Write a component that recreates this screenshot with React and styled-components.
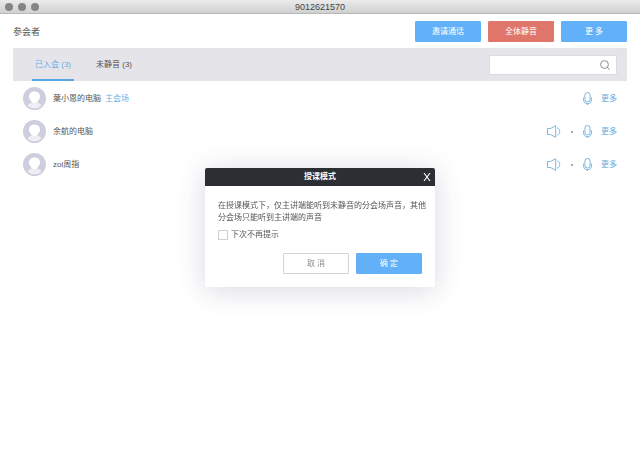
import styled, { createGlobalStyle } from "styled-components";
import { useState } from "react";

const members = [
  { id: 1, name: "葉小恩的电脑", tag: "主会场", speaker: false },
  { id: 2, name: "余航的电脑", speaker: true },
  { id: 3, name: "zol周指", speaker: true },
];

function AvatarIcon() {
  return (
    <svg width="23" height="23" viewBox="0 0 46 46" aria-hidden="true">
      <circle cx="23" cy="23" r="23" fill="#cdcfde" />
      <path d="M9 37c2-4 6-4.500 10-7h8c4 2.500 8 3 10 7a20 20 0 0 1-28 0z" fill="#eeeef4" />
      <path
        d="M23 9c-7 0-11 4.300-11 10 0 3 1 5 2.500 6.500C16 29 18 32 23 32s7-3 8.500-6.500C33 24 34 22 34 19c0-5.700-4-10-11-10z"
        fill="#fff"
      />
    </svg>
  );
}

function MicIcon() {
  return (
    <svg width="9" height="13" viewBox="0 0 9 13" fill="none" stroke="currentColor" strokeWidth="0.900" aria-hidden="true">
      <rect x="1.900" y="0.500" width="5.200" height="9.500" rx="2.600" />
      <path d="M0.500 5.500v2c0 2.500 1.500 4.300 4 4.300s4-1.800 4-4.300v-2M4.500 11.800v1.200" />
    </svg>
  );
}

function SpeakerIcon() {
  return (
    <svg width="14" height="13" viewBox="0 0 14 13" fill="none" stroke="currentColor" strokeWidth="0.900" aria-hidden="true">
      <path d="M0.500 3.500h3L8.700 0.700v11.600L3.500 9.500h-3z" />
      <path d="M10.300 2.800c3.200 1.200 3.200 6.200 0 7.400" />
    </svg>
  );
}

function SearchIcon() {
  return (
    <svg width="10" height="10" viewBox="0 0 10 10" fill="none" stroke="#8e8e90" aria-hidden="true">
      <circle cx="4.500" cy="4.500" r="3.900" />
      <path d="M7.300 7.300l2.400 2.400" />
    </svg>
  );
}

function Member({ member }) {
  return (
    <Row>
      <AvatarIcon />
      <Name>{member.name}</Name>
      {member.tag && <Tag>{member.tag}</Tag>}
      <Actions>
        {member.speaker && (
          <>
            <IconButton aria-label="扬声器">
              <SpeakerIcon />
            </IconButton>
            <Dot />
          </>
        )}
        <IconButton aria-label="麦克风">
          <MicIcon />
        </IconButton>
        <More>更多</More>
      </Actions>
    </Row>
  );
}

function App() {
  const [tab, setTab] = useState("joined");
  const [open, setOpen] = useState(true);

  return (
    <>
      <GlobalStyle />
      <TitleBar>
        <Lights>
          <Light />
          <Light />
          <Light />
        </Lights>
        <span>9012621570</span>
      </TitleBar>
      <Main>
        <Header>
          <h1>参会者</h1>
          <Button>邀请通话</Button>
          <Button $variant="danger">全体静音</Button>
          <Button>更 多</Button>
        </Header>
        <Toolbar>
          <Tab $active={tab === "joined"} onClick={() => setTab("joined")}>
            已入会 (3)
          </Tab>
          <Tab $active={tab === "unmuted"} onClick={() => setTab("unmuted")}>
            未静音 (3)
          </Tab>
          <Search>
            <input type="text" aria-label="搜索" />
            <SearchIcon />
          </Search>
        </Toolbar>
        <List>
          {members.map((m) => (
            <Member key={m.id} member={m} />
          ))}
        </List>
      </Main>
      {open && (
        <Overlay>
          <Dialog role="dialog" aria-labelledby="dialog-title">
            <DialogHeader>
              <h2 id="dialog-title">授课模式</h2>
              <Close aria-label="关闭" onClick={() => setOpen(false)}>
                <svg width="8" height="8" viewBox="0 0 8 8" stroke="#fff" strokeWidth="1.100">
                  <path d="M1 0l6 8M7 0L1 8" />
                </svg>
              </Close>
            </DialogHeader>
            <DialogBody>
              <p>在授课模式下，仅主讲端能听到未静音的分会场声音，其他分会场只能听到主讲端的声音</p>
              <Check>
                <input type="checkbox" />
                下次不再提示
              </Check>
              <Footer>
                <Button $variant="plain" onClick={() => setOpen(false)}>
                  取 消
                </Button>
                <Button onClick={() => setOpen(false)}>确 定</Button>
              </Footer>
            </DialogBody>
          </Dialog>
        </Overlay>
      )}
    </>
  );
}

const GlobalStyle = createGlobalStyle`
  * {
    box-sizing: border-box;
  }
  body {
    margin: 0;
    background: #fff;
    color: #555;
    font-family: "Liberation Sans", "Noto Sans CJK SC", sans-serif;
    font-size: 8px;
    line-height: 12px;
  }
  h1, h2, p, ul {
    margin: 0;
    padding: 0;
    font-weight: normal;
  }
  button, input {
    font: inherit;
    color: inherit;
  }
  button {
    padding: 0;
    border: none;
    background: none;
    cursor: pointer;
  }
  svg {
    display: block;
    flex: none;
  }
`;

const TitleBar = styled.div`
  display: grid;
  grid-template-columns: 1fr auto 1fr;
  align-items: center;
  height: 14px;
  padding: 0 5px;
  border-bottom: 1px solid #b8b8b8;
  background: linear-gradient(#ebebeb, #d0d0d0);
  color: #444;
  font-size: 9px;
`;

const Lights = styled.div`
  display: flex;
  gap: 5px;
`;

const Light = styled.span`
  width: 8px;
  height: 8px;
  border-radius: 50%;
  background: #858585;
`;

const Main = styled.main`
  padding: 7px 13px;
`;

const Header = styled.header`
  display: flex;
  align-items: center;
  gap: 7px;
  h1 {
    margin-right: auto;
    font-size: 9px;
  }
`;

const variants = {
  primary: { bg: "#62b1f8", color: "#fff", border: "#62b1f8" },
  danger: { bg: "#e0756c", color: "#fff", border: "#e0756c" },
  plain: { bg: "#fff", color: "#8c8c8c", border: "#d4d4d8" },
};

const Button = styled.button`
  width: 66px;
  height: 21px;
  border: 1px solid ${({ $variant = "primary" }) => variants[$variant].border};
  border-radius: 1px;
  background: ${({ $variant = "primary" }) => variants[$variant].bg};
  color: ${({ $variant = "primary" }) => variants[$variant].color};
`;

const Toolbar = styled.div`
  display: flex;
  align-items: stretch;
  gap: 19px;
  height: 33px;
  margin-top: 6px;
  padding: 0 10px 0 19px;
  background: #e5e4e9;
`;

const Tab = styled.button`
  padding: 2px 3px 0;
  border-bottom: 2px solid transparent;
  ${({ $active }) => $active && "color: #68aee6; border-color: #5aa5e4;"}
`;

const Search = styled.label`
  display: flex;
  align-items: center;
  align-self: center;
  width: 128px;
  height: 20px;
  margin-left: auto;
  padding-right: 6px;
  border: 1px solid #dcdbe0;
  border-radius: 1px;
  background: #fff;
  input {
    flex: 1;
    min-width: 0;
    padding: 0 6px;
    border: none;
    outline: none;
    background: none;
  }
`;

const List = styled.ul`
  padding-top: 1px;
  list-style: none;
`;

const Row = styled.li`
  display: flex;
  align-items: center;
  height: 33px;
  padding: 0 10px;
`;

const Name = styled.span`
  margin-left: 7px;
`;

const Tag = styled.span`
  margin-left: 4px;
  color: #6fb4e6;
`;

const Actions = styled.div`
  display: flex;
  align-items: center;
  gap: 9px;
  margin-left: auto;
  color: #6aaedc;
`;

const IconButton = styled.button`
  display: flex;
`;

const Dot = styled.span`
  width: 2px;
  height: 2px;
  margin: 0 1px;
  border-radius: 50%;
  background: #8a9199;
`;

const More = styled.button``;

const Overlay = styled.div`
  position: fixed;
  inset: 0;
  display: flex;
  align-items: center;
  justify-content: center;
  padding-bottom: 20px;
`;

const Dialog = styled.div`
  width: 230px;
  border-radius: 2px;
  background: #fff;
  box-shadow: 0 3px 28px rgba(60, 60, 110, 0.2);
`;

const DialogHeader = styled.div`
  display: grid;
  grid-template-columns: 1fr auto 1fr;
  align-items: center;
  height: 18px;
  padding: 0 4px;
  border-radius: 2px 2px 0 0;
  background: #2b2e33;
  color: #fff;
  h2 {
    grid-column: 2;
    font-size: 8px;
    font-weight: bold;
  }
`;

const Close = styled.button`
  justify-self: end;
`;

const DialogBody = styled.div`
  padding: 14px 13px 13px;
  p {
    margin-right: -9px;
  }
`;

const Check = styled.label`
  display: flex;
  align-items: center;
  gap: 3px;
  margin-top: 5px;
  input {
    appearance: none;
    width: 10px;
    height: 10px;
    margin: 0;
    border: 1px solid #cfcfd4;
    background: #fff;
  }
  input:checked {
    background: #62b1f8;
  }
`;

const Footer = styled.div`
  display: flex;
  justify-content: flex-end;
  gap: 7px;
  margin-top: 12px;
`;

export default App;
